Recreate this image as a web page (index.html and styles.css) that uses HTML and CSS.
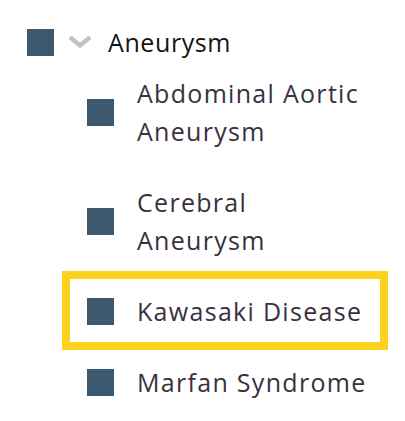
FILE: index.html
```html
<!DOCTYPE html>
<html lang="en">
<head>
<meta charset="utf-8">
<title>Aneurysm</title>
<link rel="stylesheet" href="styles.css">
</head>
<body>
<ul class="tree">
  <li class="node">
    <div class="head">
      <span class="box"></span>
      <svg class="chev" width="22" height="12" viewBox="0 0 22 12" aria-hidden="true"><polyline points="2.5,2.5 11,9.5 19.5,2.5" fill="none" stroke="#c2c2c2" stroke-width="4.4" stroke-linecap="square" stroke-linejoin="miter"/></svg>
      <span class="head-label">Aneurysm</span>
    </div>
    <ul class="children">
      <li class="child"><span class="box"></span><span class="label">Abdominal Aortic Aneurysm</span></li>
      <li class="child"><span class="box"></span><span class="label">Cerebral Aneurysm</span></li>
      <li class="child focused"><span class="box"></span><span class="label">Kawasaki Disease</span></li>
      <li class="child"><span class="box"></span><span class="label">Marfan Syndrome</span></li>
    </ul>
  </li>
</ul>
</body>
</html>
```

FILE: styles.css
```css
html, body {
  margin: 0;
  padding: 0;
  background: #ffffff;
}

body {
  font-family: "Open Sans", "Liberation Sans", sans-serif;
  font-size: 25px;
  line-height: 38px;
}

.tree {
  list-style: none;
  margin: 0;
  padding: 23px 0 0 0;
}

.node {
  margin: 0;
  padding: 0;
}

.head {
  display: flex;
  align-items: center;
  height: 38px;
  padding-left: 27px;
}

.box {
  flex: 0 0 auto;
  width: 27px;
  height: 27px;
  background: #3d5970;
}

.chev {
  flex: 0 0 auto;
  margin-left: 15px;
  display: block;
}

.head-label {
  margin-left: 17px;
  color: #141414;
  letter-spacing: 0.6px;
}

.children {
  list-style: none;
  margin: 0;
  padding: 0 25px 0 70px;
}

.child {
  display: flex;
  align-items: center;
  gap: 23px;
  padding: 13px 10px 12px 17px;
  margin-bottom: 8px;
  color: #3a3040;
}

.label {
  letter-spacing: 1.3px;
}

.focused {
  outline: 8px solid #fdd21c;
  outline-offset: 0;
}
```
